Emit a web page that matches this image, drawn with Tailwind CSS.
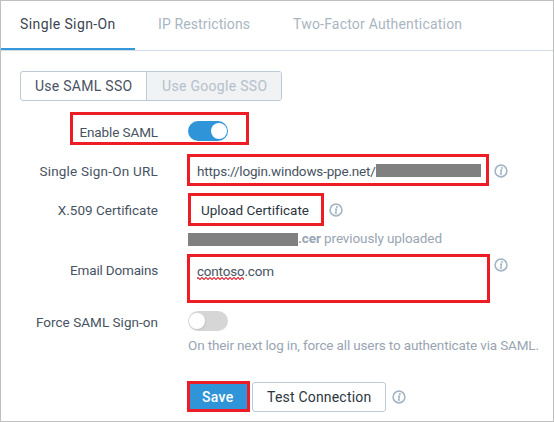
<!DOCTYPE html>
<html lang="en">
<head>
<meta charset="utf-8">
<title>Single Sign-On</title>
<script src="https://cdn.jsdelivr.net/npm/@tailwindcss/browser@4"></script>
</head>
<body class="bg-white">
<svg class="hidden">
  <symbol id="info" viewBox="0 0 14 14">
    <circle cx="7" cy="7" r="5.9" fill="none" stroke="#a5b5c4" stroke-width="1.6"/>
    <circle cx="7.9" cy="4.1" r="1" fill="#a5b5c4"/>
    <path d="M6 6.2H7.5L6.6 10.1H8" fill="none" stroke="#a5b5c4" stroke-width="1.4"/>
  </symbol>
</svg>
<main class="flex h-[422px] w-[554px] flex-col border border-[#bfbfbf] font-['Roboto',sans-serif] text-[13.5px] leading-[20px] text-[#485362]">
  <nav class="flex h-[50px] shrink-0 border-b border-[#d0dbe3] text-[14px] text-[#a9b6c2]">
    <div class="h-[49px] w-[134px] border-b-2 border-[#3498db] pl-[19px] pt-[13px] whitespace-nowrap text-[#3c4650]"><span class="tracking-[0.4px]">Single Sign-On</span></div>
    <div class="w-[135px] pl-[23px] pt-[13px] whitespace-nowrap"><span class="tracking-[0.12px]">IP Restrictions</span></div>
    <div class="pl-[23px] pt-[13px] whitespace-nowrap"><span class="tracking-[0.2px]">Two-Factor Authentication</span></div>
  </nav>

  <div class="mt-[20px] ml-[19px] flex h-[30px] w-[262px] shrink-0 overflow-hidden rounded-[3px] border border-[#bccad6] text-[14px]">
    <div class="w-[126px] border-r border-[#bccad6] pl-[14px] pt-[4px] whitespace-nowrap"><span class="tracking-[0.27px]">Use SAML SSO</span></div>
    <div class="flex-1 bg-[#f0f2f4] pl-[15px] pt-[4px] whitespace-nowrap text-[#b5c0cb]"><span class="tracking-[0.3px]">Use Google SSO</span></div>
  </div>

  <div class="mt-[11px] ml-[69px] flex h-[33px] w-[179px] shrink-0 border-3 border-[#ee1c25]">
    <div class="w-[85px] pt-[7px] text-right whitespace-nowrap"><span class="tracking-[-0.1px]">Enable SAML</span></div>
    <div class="mt-[6px] ml-[30px] flex h-[20px] w-[40px] justify-end rounded-full bg-[#3095d8] p-[2px] pr-[1px]"><div class="size-[16px] rounded-full bg-white"></div></div>
  </div>

  <div class="mt-[9px] flex h-[32px] shrink-0">
    <div class="w-[157px] pt-[7px] text-right whitespace-nowrap"><span class="tracking-[0.22px]">Single Sign-On URL</span></div>
    <div class="ml-[29px] flex w-[302px] border-3 border-[#ee1c25] pl-[7px] pt-[4px] whitespace-nowrap">
      <div class="w-[179px]"><span class="tracking-[-0.18px]">https://login.windows-ppe.net/</span></div>
      <div class="mt-[3px] h-[13px] w-[105px] bg-[#808080]"></div>
    </div>
    <svg class="mt-[10px] ml-[5px] size-[14px]"><use href="#info"/></svg>
  </div>

  <div class="mt-[7px] flex h-[33px] shrink-0">
    <div class="w-[157px] pt-[7px] text-right whitespace-nowrap"><span>X.509 Certificate</span></div>
    <div class="ml-[30px] w-[136px] border-3 border-[#ee1c25] pl-[10px] pt-[4px] whitespace-nowrap text-[#2c3640]"><span class="tracking-[-0.01px]">Upload Certificate</span></div>
    <svg class="mt-[10px] ml-[5px] size-[14px]"><use href="#info"/></svg>
  </div>
  <div class="mt-[2px] ml-[187px] flex h-[21px] shrink-0 whitespace-nowrap text-[#99a5b3]">
    <div class="mt-[5px] h-[13px] w-[110px] bg-[#808080]"></div>
    <span class="tracking-[-0.1px]"><b>.cer</b> previously uploaded</span>
  </div>

  <div class="mt-[5px] flex h-[49px] shrink-0">
    <div class="w-[157px] pt-[6px] text-right whitespace-nowrap"><span class="tracking-[-0.18px]">Email Domains</span></div>
    <div class="ml-[29px] w-[303px] border-3 border-[#ee1c25] pl-[7px] pt-[4px] whitespace-nowrap tracking-[-0.2px]"><span class="bg-[radial-gradient(circle_at_1px_1px,#ee5560_0.8px,transparent_1px),radial-gradient(circle_at_3px_2px,#ee5560_0.8px,transparent_1px)] bg-[length:4px_3px] bg-bottom-left bg-repeat-x pb-px">contoso</span><span>.com</span></div>
    <svg class="mt-[4px] ml-[4px] size-[14px]"><use href="#info"/></svg>
  </div>

  <div class="mt-[8px] flex h-[20px] shrink-0">
    <div class="w-[157px] pt-[1px] text-right whitespace-nowrap"><span class="tracking-[0.03px]">Force SAML Sign-on</span></div>
    <div class="ml-[30px] flex h-[20px] w-[40px] rounded-full bg-[#d6d6d6] p-[2px] pl-[1px]"><div class="size-[16px] rounded-full bg-white shadow-[1px_1px_1px_#c6c6c6]"></div></div>
  </div>
  <div class="mt-[4px] ml-[187px] h-[20px] shrink-0 whitespace-nowrap text-[#99a5b3]"><span class="tracking-[-0.14px]">On their next log in, force all users to authenticate via SAML.</span></div>

  <div class="mt-[26px] ml-[186px] flex h-[31px] shrink-0 text-[14px]">
    <div class="w-[63px] border-3 border-[#ee1c25] bg-[#3095d8] pl-[12px] pt-[3px] font-medium whitespace-nowrap text-white"><span class="tracking-[0.3px]">Save</span></div>
    <div class="mt-[1px] ml-[2px] h-[30px] w-[134px] rounded-[3px] border border-[#bccad6] pl-[14px] pt-[4px] whitespace-nowrap text-[#2c3640]"><span class="tracking-[0.2px]">Test Connection</span></div>
    <svg class="mt-[9px] ml-[6px] size-[14px]"><use href="#info"/></svg>
  </div>
</main>
</body>
</html>
